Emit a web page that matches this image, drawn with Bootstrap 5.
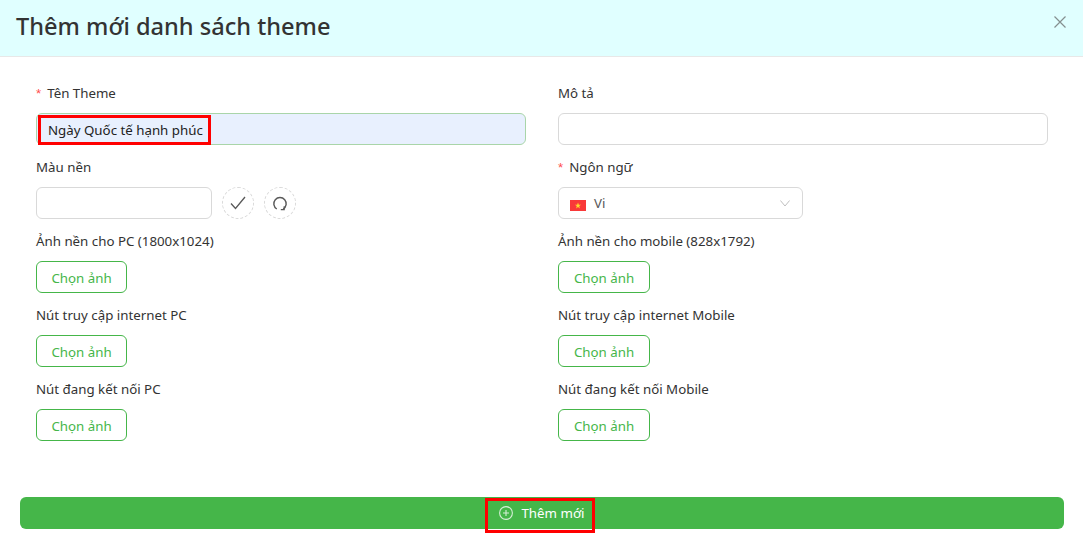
<!DOCTYPE html>
<html lang="vi">
<head>
<meta charset="utf-8">
<title>Thêm mới danh sách theme</title>
<link rel="stylesheet" href="https://cdn.jsdelivr.net/npm/bootstrap@5.3.0/dist/css/bootstrap.min.css">
<style>
html,body{height:540px;overflow:hidden;background:#fff}
body{font-family:"Noto Sans","Open Sans",sans-serif;font-size:13.3px;color:#333;line-height:20px}
.dlg-head{height:57px;background:#e0ffff;border-bottom:1px solid #e8e8e8;padding:0 17px 0 16px}
.dlg-title{font-size:23.6px;font-weight:500;line-height:52px;margin:0 0 4px;color:#333}
.dlg-close{color:#858f8f;line-height:0;margin-bottom:12px}
.dlg-body{padding:26px 35px 0 36px}
.cols{display:grid;grid-template-columns:490px 490px;column-gap:32px}
.fld{height:74px}
.fld-lab{height:20px;margin-bottom:10px;white-space:nowrap}
.req{color:#ff4d4f;margin-right:6px;font-family:"Liberation Sans",sans-serif}
.fld-input{display:block;width:100%;height:32px;border:1px solid #d9d9d9;border-radius:6px;background:#fff;padding:2px 11px 0;font:inherit;color:#222;outline:0}
.fld-input.filled{background:#e8f0fe;border-color:#a9d5a9;color:#222}
.wrap-mark{position:relative}
.red-box{position:absolute;border:3px solid #f00;pointer-events:none}
.rb-a{left:2px;top:2px;width:173px;height:30px}
.rb-b{left:485px;top:1px;width:110px;height:35px}
.color-in{width:176px}
.color-row{gap:10px}
.circ{width:32px;height:32px;border:1px dashed #d9d9d9;border-radius:50%;color:#595959}
.lang-sel{width:245px;height:32px;border:1px solid #d9d9d9;border-radius:6px;padding:0 12px 0 11px;color:#595959}
.flag{width:16px;height:11px;margin:4px 8px 0 0}
.pick-btn{width:91px;height:32px;border:1px solid #45b649;border-radius:6px;background:#fff;color:#45b649;padding:1px 0 0;font-size:13.3px;line-height:20px}
.pick-wide{width:92px}
.foot-wrap{padding:0 19px 0 20px;margin-top:44px}
.go-btn{width:100%;height:32px;border:0;border-radius:6px;background:#45b649;color:#fff;font-size:13.3px;line-height:20px;padding:0}
</style>
</head>
<body>
<div class="dlg-head d-flex align-items-center justify-content-between">
  <h1 class="dlg-title">Thêm mới danh sách theme</h1>
  <span class="dlg-close" aria-label="Đóng"><svg width="12" height="12" viewBox="0 0 12 12" fill="none" stroke="currentColor" stroke-width="1.2"><path d="M.5.5l11 11M11.500.5l-11 11"/></svg></span>
</div>
<div class="dlg-body">
  <div class="cols">
    <div class="fld">
      <div class="fld-lab"><span class="req">*</span>Tên Theme</div>
      <div class="wrap-mark">
        <input class="fld-input filled" value="Ngày Quốc tế hạnh phúc">
        <span class="red-box rb-a"></span>
      </div>
    </div>
    <div class="fld">
      <div class="fld-lab">Mô tả</div>
      <input class="fld-input">
    </div>
    <div class="fld">
      <div class="fld-lab">Màu nền</div>
      <div class="d-flex color-row">
        <input class="fld-input color-in">
        <span class="circ d-flex align-items-center justify-content-center"><svg width="16" height="14" viewBox="0 0 16 14" fill="none" stroke="currentColor" stroke-width="1.3"><path d="M1 7.500l4.500 5L15 1"/></svg></span>
        <span class="circ d-flex align-items-center justify-content-center"><svg width="16" height="16" viewBox="0 0 16 16" fill="none" stroke="currentColor" stroke-width="1.4"><path d="M4.800 14A6.200 6.200 0 1 1 11.200 14"/><path d="M8.800 14.600h3.400v-3.400" stroke-width="1.200"/></svg></span>
      </div>
    </div>
    <div class="fld">
      <div class="fld-lab"><span class="req">*</span>Ngôn ngữ</div>
      <div class="lang-sel d-flex align-items-center">
        <svg class="flag" viewBox="0 0 16 11"><rect width="16" height="11" fill="#f93939"/><path d="M8 2.500l.8 2.200h2.300l-1.900 1.400.7 2.300L8 7l-1.900 1.400.7-2.300L4.900 4.700h2.300z" fill="#ffda2c"/></svg>
        <span class="flex-grow-1">Vi</span>
        <svg width="10" height="7" viewBox="0 0 10 7" fill="none" stroke="#bfbfbf" stroke-width="1"><path d="M.4.500L5 6 9.600.5"/></svg>
      </div>
    </div>
    <div class="fld">
      <div class="fld-lab">Ảnh nền cho PC (1800x1024)</div>
      <button class="btn pick-btn" type="button">Chọn ảnh</button>
    </div>
    <div class="fld">
      <div class="fld-lab">Ảnh nền cho mobile (828x1792)</div>
      <button class="btn pick-btn pick-wide" type="button">Chọn ảnh</button>
    </div>
    <div class="fld">
      <div class="fld-lab">Nút truy cập internet PC</div>
      <button class="btn pick-btn" type="button">Chọn ảnh</button>
    </div>
    <div class="fld">
      <div class="fld-lab">Nút truy cập internet Mobile</div>
      <button class="btn pick-btn pick-wide" type="button">Chọn ảnh</button>
    </div>
    <div class="fld">
      <div class="fld-lab">Nút đang kết nối PC</div>
      <button class="btn pick-btn" type="button">Chọn ảnh</button>
    </div>
    <div class="fld">
      <div class="fld-lab">Nút đang kết nối Mobile</div>
      <button class="btn pick-btn pick-wide" type="button">Chọn ảnh</button>
    </div>
  </div>
</div>
<div class="foot-wrap wrap-mark">
  <button class="btn go-btn d-flex align-items-center justify-content-center gap-2" type="button">
    <svg width="14" height="14" viewBox="0 0 14 14" fill="none" stroke="#d5eed6" stroke-width="1.100"><circle cx="7" cy="7" r="6.400"/><path d="M4 7h6M7 4v6"/></svg>
    <span>Thêm mới</span>
  </button>
  <span class="red-box rb-b"></span>
</div>
</body>
</html>
